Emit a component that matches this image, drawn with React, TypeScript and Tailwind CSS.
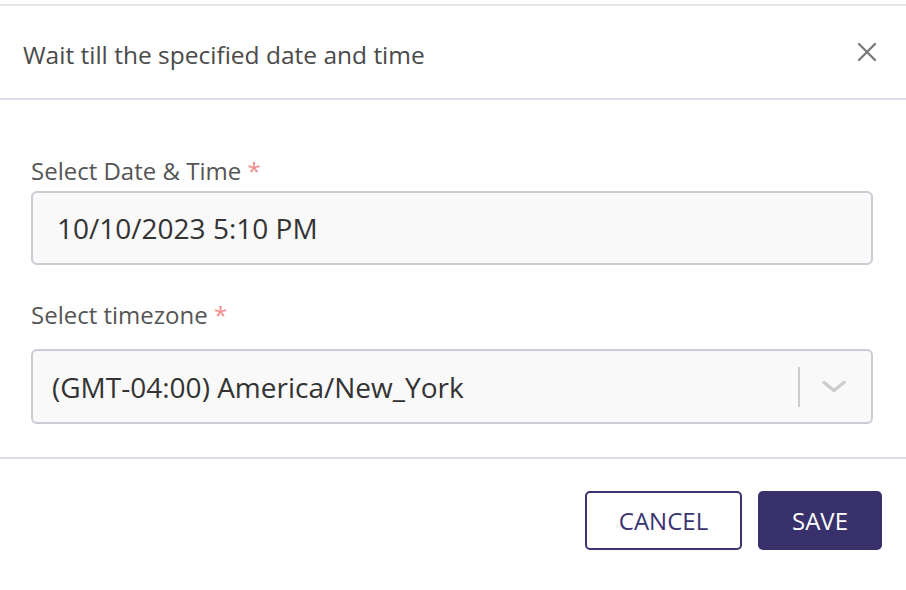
import React from "react";

export default function App() {
  const font = { fontFamily: '"Open Sans", "Noto Sans", sans-serif' };
  return (
    <div className="w-[906px] h-[590px] bg-white overflow-hidden" style={font}>
      <div className="mt-[4px] border-t-2 border-[#e6e6e6]" />
      <div className="h-[94px] pl-[23px] pr-[29px] flex items-center justify-between border-b-2 border-[#dcdcee]">
        <span className="text-[24.5px] leading-[32px] text-[#4a4a4a] pt-[6px]">Wait till the specified date and time</span>
        <svg width="20" height="20" viewBox="0 0 20 20">
          <path d="M2 2L18 18M18 2L2 18" stroke="#777" strokeWidth="2.2" strokeLinecap="round" />
        </svg>
      </div>
      <div className="pl-[31px] pr-[33px] pt-[55px] flex flex-col">
        <div className="text-[24px] leading-[32px] text-[#555]">
          Select Date &amp; Time <span className="text-[#f28b8b]">*</span>
        </div>
        <div className="mt-[4px] h-[74px] rounded-[6px] border-2 border-[#cbcbd6] bg-[#f9f9f9] flex items-center pl-[24px]">
          <span className="text-[28px] text-[#333]">10/10/2023 5:10 PM</span>
        </div>
        <div className="mt-[34px] text-[24px] leading-[32px] text-[#555]">
          Select timezone <span className="text-[#f28b8b]">*</span>
        </div>
        <div className="mt-[18px] h-[75px] rounded-[6px] border-2 border-[#cbcbd6] bg-[#f9f9f9] flex items-center pl-[19px] pr-[23px]">
          <span className="flex-1 text-[28px] text-[#333]">(GMT-04:00) America/New_York</span>
          <div className="w-[2px] h-[40px] bg-[#cccccc]" />
          <svg width="28" height="16" viewBox="0 0 28 16" className="ml-[20px]">
            <path d="M4 3.5L14 11.5L24 3.5" stroke="#cccccc" strokeWidth="3.5" fill="none" strokeLinecap="round" strokeLinejoin="round" />
          </svg>
        </div>
      </div>
      <div className="mt-[33px] border-t-2 border-[#dcdcee] flex justify-end gap-[16px] pr-[24px] pt-[32px]">
        <button className="w-[157px] h-[59px] rounded-[5px] border-2 border-[#3a3370] bg-white text-[#3a3370] text-[24px]">
          CANCEL
        </button>
        <button className="w-[124px] h-[59px] rounded-[5px] bg-[#38316c] text-white text-[24px]">
          SAVE
        </button>
      </div>
    </div>
  );
}
